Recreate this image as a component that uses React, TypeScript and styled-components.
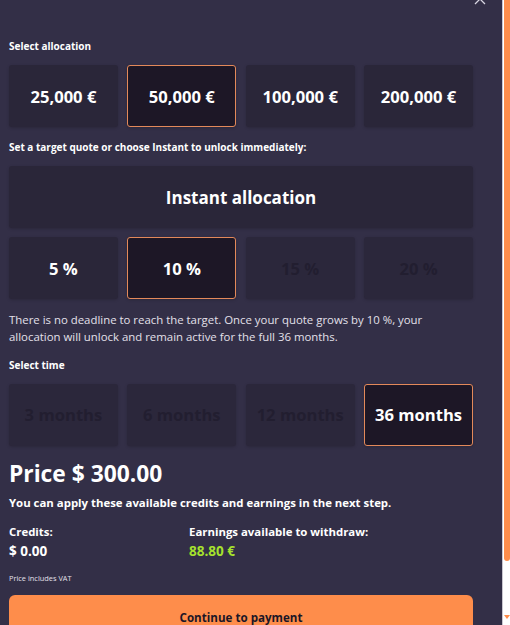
import { FC } from 'react';
import styled, { createGlobalStyle, css } from 'styled-components';

const GlobalStyle = createGlobalStyle`
    html, body {
        margin: 0;
        padding: 0;
        background: #332f47;
    }

    body {
        font-family: 'Open Sans', 'Noto Sans', sans-serif;
        color: #ffffff;
        -webkit-font-smoothing: antialiased;
    }
`;

const Screen = styled.div`
    display: flex;
    width: 510px;
    height: 625px;
    overflow: hidden;
`;

const Panel = styled.div`
    position: relative;
    flex: 1;
    padding: 39px 29px 0 9px;
    background: #332f47;
`;

const CloseButton = styled.button`
    position: absolute;
    top: -8px;
    right: 15px;
    width: 14px;
    height: 14px;
    padding: 0;
    border: none;
    background: none;
    color: #d8d5e2;
`;

const Label = styled.div<{ $top?: number }>`
    font-size: 10px;
    font-weight: 700;
    line-height: 14px;
    margin-top: ${({ $top }) => $top ?? 0}px;
    margin-bottom: 12px;
`;

const OptionGrid = styled.div`
    display: grid;
    grid-template-columns: repeat(4, 1fr);
    gap: 9.5px;
`;

const Option = styled.div<{ $selected?: boolean; $disabled?: boolean }>`
    display: flex;
    align-items: center;
    justify-content: center;
    height: 62px;
    box-sizing: border-box;
    border-radius: 3px;
    background: #2a2639;
    box-shadow: 0 1px 3px rgba(0, 0, 0, 0.18);
    font-size: 16.6px;
    font-weight: 700;
    color: #ffffff;
    white-space: nowrap;

    ${({ $selected }) =>
        $selected &&
        css`
            background: #1d1726;
            border: 1.5px solid #e3895a;
        `}

    ${({ $disabled }) =>
        $disabled &&
        css`
            background: #2b273b;
            color: #221e30;
        `}
`;

const InstantOption = styled(Option)`
    font-size: 17px;
    margin-bottom: 9px;
`;

const Description = styled.p`
    margin: 11.5px 0 0;
    font-size: 11.4px;
    line-height: 17px;
    color: #e3e0ea;
`;

const Price = styled.div`
    margin-top: 13px;
    font-size: 22.8px;
    font-weight: 700;
    line-height: 30px;
`;

const Hint = styled.div`
    margin-top: 6px;
    font-size: 11.4px;
    font-weight: 700;
    line-height: 16px;
`;

const Balances = styled.div`
    display: grid;
    grid-template-columns: 180px 1fr;
    margin-top: 13px;
`;

const BalanceTitle = styled.div`
    font-size: 11.4px;
    font-weight: 700;
    line-height: 16px;
`;

const BalanceValue = styled.div<{ $accent?: boolean }>`
    margin-top: 1px;
    font-size: 13.5px;
    font-weight: 700;
    line-height: 20px;
    color: ${({ $accent }) => ($accent ? '#a6e22e' : '#ffffff')};
`;

const VatNote = styled.div`
    margin-top: 12px;
    font-size: 7.4px;
    line-height: 10px;
    color: #e3e0ea;
`;

const PayButton = styled.button`
    display: block;
    width: 100%;
    margin-top: 12px;
    height: 44px;
    border: none;
    border-radius: 6px;
    background: #fe8d4b;
    font-family: inherit;
    font-size: 11.6px;
    font-weight: 700;
    color: #1b1626;
    padding: 2px 0 0;
`;

const ScrollTrack = styled.div`
    position: relative;
    width: 7px;
    background: #ffffff;
    border-left: 1px solid #c9c6cf;
`;

const ScrollThumb = styled.div`
    margin-left: 1px;
    width: 6px;
    height: 561px;
    background: #fe8d4b;
    border-radius: 0 0 3px 3px;
`;

const ScrollArrow = styled.div`
    position: absolute;
    bottom: 6px;
    right: 0;
    width: 0;
    height: 0;
    border-left: 3px solid transparent;
    border-right: 3px solid transparent;
    border-top: 4px solid #fe8d4b;
`;

const allocations = ['25,000 €', '50,000 €', '100,000 €', '200,000 €'];
const targets = ['5 %', '10 %', '15 %', '20 %'];
const durations = ['3 months', '6 months', '12 months', '36 months'];

const App: FC = () => (
    <Screen>
        <GlobalStyle />
        <Panel>
            <CloseButton aria-label="Close">
                <svg width="14" height="14" viewBox="0 0 14 14" fill="none" stroke="currentColor" strokeWidth="1.3">
                    <path d="M2 2l10 10M12 2L2 12" />
                </svg>
            </CloseButton>

            <Label>Select allocation</Label>
            <OptionGrid>
                {allocations.map((item) => (
                    <Option key={item} $selected={item === '50,000 €'}>
                        {item}
                    </Option>
                ))}
            </OptionGrid>

            <Label $top={13}>Set a target quote or choose Instant to unlock immediately:</Label>
            <InstantOption>Instant allocation</InstantOption>
            <OptionGrid>
                {targets.map((item, i) => (
                    <Option key={item} $selected={item === '10 %'} $disabled={i > 1}>
                        {item}
                    </Option>
                ))}
            </OptionGrid>

            <Description>
                There is no deadline to reach the target. Once your quote grows by 10 %, your allocation will
                unlock and remain active for the full 36 months.
            </Description>

            <Label $top={13}>Select time</Label>
            <OptionGrid>
                {durations.map((item, i) => (
                    <Option key={item} $selected={i === 3} $disabled={i < 3}>
                        {item}
                    </Option>
                ))}
            </OptionGrid>

            <Price>Price $ 300.00</Price>
            <Hint>You can apply these available credits and earnings in the next step.</Hint>

            <Balances>
                <div>
                    <BalanceTitle>Credits:</BalanceTitle>
                    <BalanceValue>$ 0.00</BalanceValue>
                </div>
                <div>
                    <BalanceTitle>Earnings available to withdraw:</BalanceTitle>
                    <BalanceValue $accent>88.80 €</BalanceValue>
                </div>
            </Balances>

            <VatNote>Price includes VAT</VatNote>
            <PayButton>Continue to payment</PayButton>
        </Panel>
        <ScrollTrack>
            <ScrollThumb />
            <ScrollArrow />
        </ScrollTrack>
    </Screen>
);

export default App;
